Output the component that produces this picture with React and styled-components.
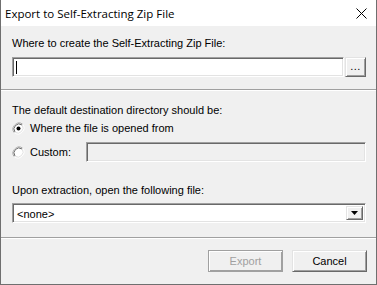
import React from "react";
import styled, { createGlobalStyle } from "styled-components";

const Global = createGlobalStyle`
  html, body { margin: 0; padding: 0; background: #f0f0f0; }
  * { box-sizing: border-box; }
`;

const Window = styled.div`
  width: 377px;
  height: 285px;
  background: #f0f0f0;
  border: 1px solid #6f6f6f;
  border-top: none;
  display: flex;
  flex-direction: column;
  font-family: "Liberation Sans", Arial, sans-serif;
  font-size: 11px;
  color: #000;
`;

const TitleBar = styled.div`
  height: 26px;
  background: #fff;
  display: flex;
  align-items: center;
  justify-content: space-between;
  padding-left: 4px;
`;

const Title = styled.div`
  font-family: "Open Sans", "Noto Sans", sans-serif;
  font-size: 11.5px;
  line-height: 16px;
  margin-top: 1px;
`;

const CloseButton = styled.div`
  width: 22px;
  height: 26px;
  margin-right: 4px;
  display: flex;
  align-items: center;
  justify-content: center;
`;

const Section = styled.div`
  padding: ${(p) => p.$pad};
  display: flex;
  flex-direction: column;
`;

const Label = styled.div`
  line-height: 13px;
  height: 13px;
  margin-bottom: ${(p) => p.$mb || 0}px;
  margin-top: ${(p) => p.$mt || 0}px;
  white-space: nowrap;
`;

const FieldRow = styled.div`
  display: flex;
  gap: 1px;
  height: 20px;
`;

const sunken = `
  border: 1px solid;
  border-color: #a0a0a0 #ffffff #ffffff #a0a0a0;
  box-shadow: inset 1px 1px 0 #696969, inset -1px -1px 0 #e3e3e3;
`;

const raised = `
  border: 1px solid;
  border-color: #e3e3e3 #696969 #696969 #e3e3e3;
  box-shadow: inset 1px 1px 0 #ffffff, inset -1px -1px 0 #a0a0a0;
`;

const TextBox = styled.div`
  ${sunken}
  flex: ${(p) => (p.$grow ? 1 : "none")};
  height: ${(p) => p.$h || 20}px;
  background: ${(p) => (p.$disabled ? "#f0f0f0" : "#fff")};
  padding: 3px 3px;
  display: flex;
  align-items: center;
`;

const Caret = styled.div`
  width: 1px;
  height: 13px;
  background: #000;
`;

const BrowseButton = styled.div`
  ${raised}
  width: 21px;
  height: 20px;
  background: #f0f0f0;
  display: flex;
  align-items: flex-end;
  justify-content: center;
  line-height: 13px;
  padding-bottom: 3px;
  letter-spacing: 0.5px;
`;

const Separator = styled.div`
  height: 2px;
  border-top: 1px solid #a0a0a0;
  border-bottom: 1px solid #ffffff;
`;

const RadioRow = styled.div`
  display: flex;
  align-items: center;
  height: 20px;
  margin-bottom: ${(p) => p.$mb || 0}px;
`;

const RadioText = styled.span`
  margin-left: 5px;
  line-height: 13px;
  width: ${(p) => (p.$w ? p.$w + "px" : "auto")};
  white-space: nowrap;
`;

const Combo = styled.div`
  ${sunken}
  height: 20px;
  background: #fff;
  display: flex;
  align-items: stretch;
  padding: 2px 2px 2px 4px;
`;

const ComboText = styled.div`
  flex: 1;
  line-height: 16px;
`;

const ComboArrow = styled.div`
  ${raised}
  width: 17px;
  background: #f0f0f0;
  display: flex;
  align-items: center;
  justify-content: center;
`;

const Footer = styled.div`
  display: flex;
  justify-content: flex-end;
  gap: 9px;
  padding: 11px 9px 0 0;
`;

const Button = styled.div`
  width: 75px;
  height: 22px;
  background: #f0f0f0;
  display: flex;
  align-items: center;
  justify-content: center;
  line-height: 13px;
  color: ${(p) => (p.$disabled ? "#a0a0a0" : "#000")};
  ${(p) =>
    p.$disabled
      ? `border: 1px solid #a0a0a0;
         box-shadow: inset 1px 1px 0 #ffffff, inset -1px -1px 0 #a0a0a0;`
      : raised}
`;

const Radio = ({ checked }) => (
  <svg width="13" height="13" viewBox="0 0 13 13">
    <path d="M2.3 10.7 A6 6 0 0 1 10.7 2.3" fill="none" stroke="#a0a0a0" strokeWidth="1" />
    <path d="M10.7 2.3 A6 6 0 0 1 2.3 10.7" fill="none" stroke="#ffffff" strokeWidth="1" />
    <circle cx="6.5" cy="6.5" r="5" fill="#fff" />
    <path d="M3 10 A5 5 0 0 1 10 3" fill="none" stroke="#696969" strokeWidth="1" />
    <path d="M10 3 A5 5 0 0 1 3 10" fill="none" stroke="#e3e3e3" strokeWidth="1" />
    {checked && <circle cx="6.5" cy="6.5" r="2" fill="#000" />}
  </svg>
);

export default function App() {
  return (
    <>
      <Global />
      <Window>
        <TitleBar>
          <Title>Export to Self-Extracting Zip File</Title>
          <CloseButton>
            <svg width="11" height="11" viewBox="0 0 11 11">
              <path d="M0.5 0.5 L10.5 10.5 M10.5 0.5 L0.5 10.5" stroke="#000" strokeWidth="1" />
            </svg>
          </CloseButton>
        </TitleBar>
        <Section $pad="11px 10px 12px 11px">
          <Label $mb={7}>Where to create the Self-Extracting Zip File:</Label>
          <FieldRow>
            <TextBox $grow>
              <Caret />
            </TextBox>
            <BrowseButton>...</BrowseButton>
          </FieldRow>
        </Section>
        <Separator />
        <Section $pad="13px 10px 14px 11px">
          <Label $mb={1}>The default destination directory should be:</Label>
          <RadioRow $mb={4}>
            <Radio checked />
            <RadioText>Where the file is opened from</RadioText>
          </RadioRow>
          <RadioRow>
            <Radio />
            <RadioText $w={56}>Custom:</RadioText>
            <TextBox $grow $disabled />
          </RadioRow>
          <Label $mt={22} $mb={6}>Upon extraction, open the following file:</Label>
          <Combo>
            <ComboText>&lt;none&gt;</ComboText>
            <ComboArrow>
              <svg width="7" height="4" viewBox="0 0 7 4">
                <path d="M0 0 H7 L3.5 4 Z" fill="#000" />
              </svg>
            </ComboArrow>
          </Combo>
        </Section>
        <Separator />
        <Footer>
          <Button $disabled>Export</Button>
          <Button>Cancel</Button>
        </Footer>
      </Window>
    </>
  );
}
